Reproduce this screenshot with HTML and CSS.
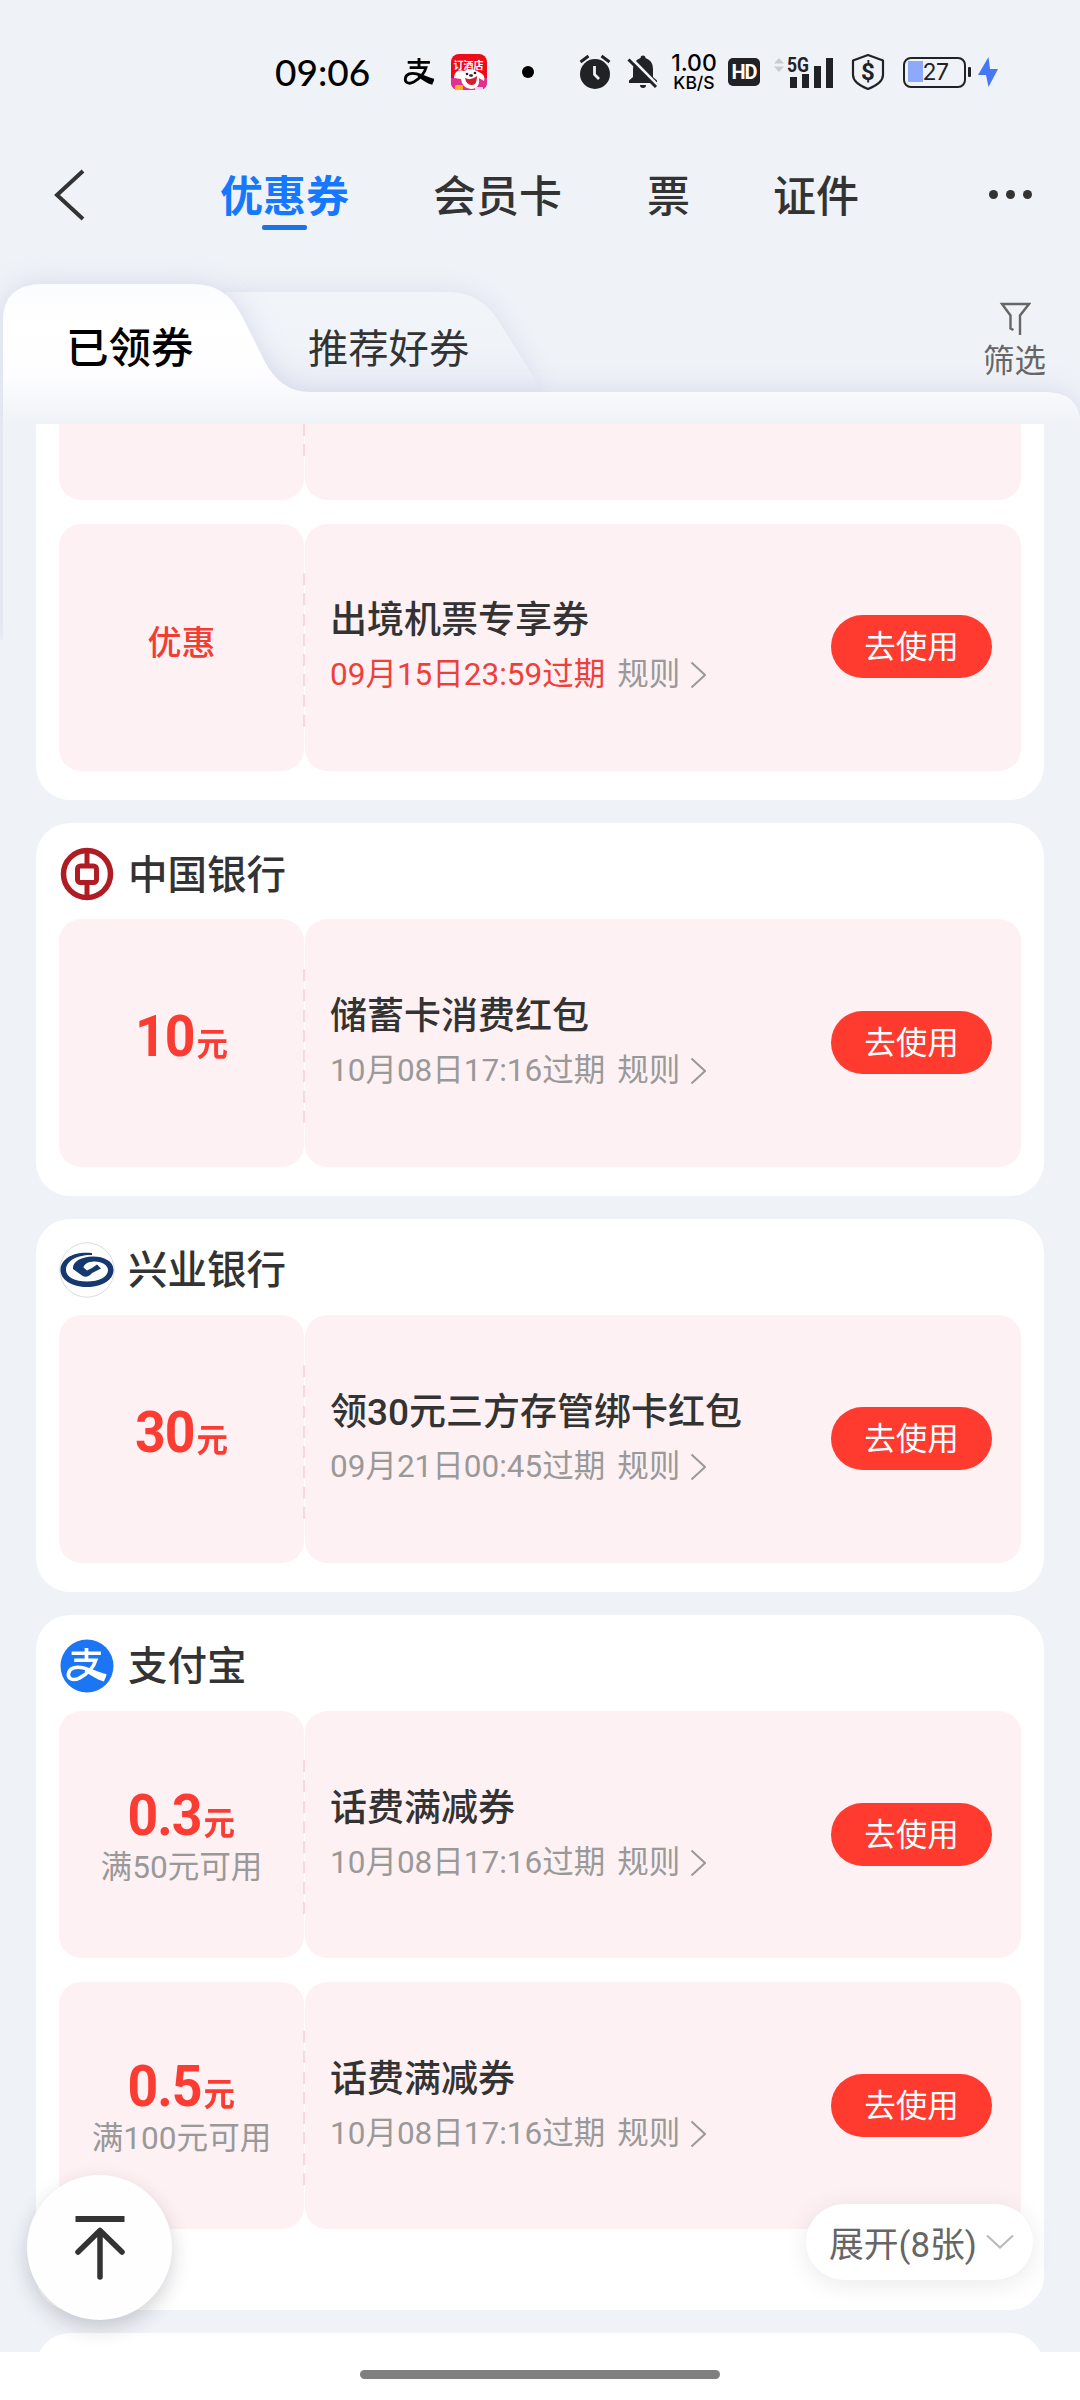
FILE: index.html
```html
<!DOCTYPE html>
<html lang="zh-CN">
<head>
<meta charset="utf-8">
<title>优惠券</title>
<link rel="stylesheet" href="styles.css">
</head>
<body>
<svg class="defs" width="0" height="0" aria-hidden="true">
  <defs>
    <symbol id="chev" viewBox="0 0 16 28"><path d="M1.500 1.500 15 14 1.500 26.500" fill="none" stroke="currentColor" stroke-width="2"/></symbol>
    <symbol id="zhi" viewBox="0 0 40 36">
      <path d="M5.500 5.500H34M20 0V12M8 12.500H29C27 20 20 27 13 31C6 34.500 1.500 31 2.500 26C3.500 20.500 10 18.500 17 20.500C24 22.500 31 27 39 28.500" fill="none" stroke="currentColor" stroke-width="3.600"/>
      <path d="M20 21.500C27 24.500 32 26.500 39.500 27.500L37 34.500C30 32.500 25 28.500 18 24Z" fill="currentColor"/>
    </symbol>
  </defs>
</svg>
<div class="screen">
  <svg class="folder" width="1080" height="430" viewBox="0 0 1080 430">
    <defs>
      <linearGradient id="front" gradientUnits="userSpaceOnUse" x1="0" y1="74" x2="0" y2="215">
        <stop offset="0" stop-color="#fbfcfe"/><stop offset=".3" stop-color="#ffffff"/><stop offset=".65" stop-color="#fdfdff"/><stop offset="1" stop-color="#eff2f7"/>
      </linearGradient>
      <linearGradient id="back" x1="0" y1="0" x2="0" y2="1">
        <stop offset="0" stop-color="#f1f4f8"/><stop offset=".5" stop-color="#f0f3f8"/><stop offset="1" stop-color="#e9edf5"/>
      </linearGradient>
      <filter id="soft" x="-10%" y="-30%" width="120%" height="160%"><feGaussianBlur stdDeviation="13"/></filter>
    </defs>
    <path d="M225 82H448Q480 82 498 110L543 182H225Z" fill="#b9c0dc" opacity=".38" filter="url(#soft)"/>
    <path d="M225 82H448Q480 82 498 110L543 182H225Z" fill="url(#back)"/>
    <path d="M3 430V110Q3 74 43 74H192C220 74 233 88 243 108L264 150Q280 182 310 182H1046Q1076 182 1080 208V430Z" fill="#b9c0dc" opacity=".5" filter="url(#soft)"/>
    <path d="M3 430V110Q3 74 43 74H192C220 74 233 88 243 108L264 150Q280 182 310 182H1046Q1076 182 1080 208V430Z" fill="url(#front)"/>
  </svg>

  <div class="status">
    <span class="time">09:06</span>
    <svg class="s-zhi" width="34" height="28"><use href="#zhi"/></svg>
    <svg class="s-app" width="36" height="36" viewBox="0 0 36 36">
      <rect width="36" height="36" rx="8" fill="#ee0a18"/>
      <path d="M0 24H36V28Q36 36 28 36H8Q0 36 0 28Z" fill="#e3308e"/>
      <text x="17.500" y="15" text-anchor="middle" class="app-text">订酒店</text>
      <path d="M3 24Q4 14 13 17Q20 13 28 18Q35 21 33 27L28 24Q29 35 20 35Q11 34 10 25Z" fill="#fff"/>
      <path d="M14 24Q20 27 26 22Q26 32 20 31Q15 30 14 24Z" fill="#d81d2c"/>
      <circle cx="16" cy="20" r="1.300" fill="#222"/><circle cx="24" cy="19" r="1.300" fill="#222"/><ellipse cx="20" cy="21.500" rx="2" ry="1.300" fill="#222"/>
      <rect x="4" y="31" width="8" height="5" rx="1" fill="#ffb31a"/><rect x="24" y="33" width="8" height="3" fill="#efd4f5"/>
    </svg>
    <i class="dot"></i>
    <svg class="s-alarm" width="32" height="36" viewBox="0 0 32 36">
      <circle cx="16" cy="20" r="15" fill="#212226"/><path d="M1.500 8 9.500 2M30.500 8 22.500 2" stroke="#212226" stroke-width="3"/><path d="M15.500 12V20.500L20 25" fill="none" stroke="#f0f3f8" stroke-width="2.800"/>
    </svg>
    <svg class="s-bell" width="32" height="36" viewBox="0 0 32 36">
      <path d="M16 1.500Q18.500 1.500 18.500 4Q26 6.500 26 15V23L30 26.500V29H2V26.500L6 23V15Q6 6.500 13.500 4Q13.500 1.500 16 1.500ZM13 31H19Q19 34 16 34Q13 34 13 31Z" fill="#212226"/>
      <path d="M3.500 3.500 31 31.500" stroke="#f0f3f8" stroke-width="3"/><path d="M1.500 5.500 29 33" stroke="#212226" stroke-width="3"/>
    </svg>
    <span class="speed"><b>1.00</b><b>KB/S</b></span>
    <span class="hd">HD</span>
    <svg class="s-sig" width="60" height="34" viewBox="0 0 60 34">
      <path d="M0 8.500 5 3 10 8.500ZM0 11.500H10L5 17Z" fill="#c9ccd1"/>
      <text x="13" y="17" class="g5" textLength="22" lengthAdjust="spacingAndGlyphs">5G</text>
      <path d="M16 22H23V33H16ZM28 19H35V33H28ZM40 11H47V33H40ZM52 3H59V33H52Z" fill="#212226"/>
    </svg>
    <svg class="s-shield" width="34" height="38" viewBox="0 0 34 38">
      <path d="M17 2 32 7.500V22Q32 30 17 36Q2 30 2 22V7.500Z" fill="none" stroke="#212226" stroke-width="2.200" stroke-linejoin="round"/>
      <text x="17" y="26.500" text-anchor="middle" class="dollar">$</text>
    </svg>
    <span class="battery"><em>27</em></span><i class="cap"></i>
    <svg class="s-bolt" width="20" height="30" viewBox="0 0 20 30"><path d="M10.500 0 0 18H8L10.500 30 20 12H12Z" fill="#4678f6"/></svg>
  </div>

  <header class="nav">
    <svg class="back" width="32" height="52" viewBox="0 0 32 52"><path d="M29 2 3 26 29 50" fill="none" stroke="#333" stroke-width="4"/></svg>
    <a class="n1 on">优惠券</a><a class="n2">会员卡</a><a class="n3">票</a><a class="n4">证件</a>
    <span class="more"><i></i><i></i><i></i></span>
  </header>

  <div class="tabs">
    <span class="t1">已领券</span><span class="t2">推荐好券</span>
    <span class="filter">
      <svg width="32" height="34" viewBox="0 0 32 34"><path d="M14.500 28 11.500 26.500V13.500L3 2H30L21 13.500V33" fill="none" stroke="#666" stroke-width="2.400"/></svg>
      <span>筛选</span>
    </span>
  </div>

  <main class="list">
    <section class="card first">
      <div class="coupon cut"><div class="amt"></div><div class="info"></div></div>
      <div class="coupon">
        <div class="amt"><div class="word">优惠</div></div>
        <div class="info"><div class="desc"><h3>出境机票专享券</h3><p><span class="soon">09月15日23:59过期</span><span>规则</span><svg width="16" height="28"><use href="#chev"/></svg></p></div><a class="btn">去使用</a></div>
      </div>
    </section>

    <section class="card">
      <div class="brand">
        <svg width="56" height="56" viewBox="0 0 56 56"><circle cx="28" cy="28" r="23.500" fill="none" stroke="#b01c24" stroke-width="5.500"/><path d="M28 5V19M28 37V51" stroke="#b01c24" stroke-width="5"/><rect x="18.500" y="20" width="19" height="16.500" rx="3" fill="none" stroke="#b01c24" stroke-width="5"/></svg>
        <h2>中国银行</h2>
      </div>
      <div class="coupon">
        <div class="amt"><div class="num">10<small>元</small></div></div>
        <div class="info"><div class="desc"><h3>储蓄卡消费红包</h3><p><span>10月08日17:16过期</span><span>规则</span><svg width="16" height="28"><use href="#chev"/></svg></p></div><a class="btn">去使用</a></div>
      </div>
    </section>

    <section class="card">
      <div class="brand">
        <svg width="56" height="56" viewBox="0 0 56 56"><circle cx="28" cy="28" r="27.200" fill="#fff" stroke="#dcdce2"/><path d="M33 11C14 9 1.500 17 1.500 28C1.500 38 13 45 28 45C43 45 54.500 38 54.500 28C54.500 19 45 14.500 34 14.500C22 14.500 13 20 14 27L23 33.500Q28 37 33 31L42 26.500 38 22.500 33 26 28 28.500 24.500 25.500C25 22 30 19 36 19.500C43 20 49 23 49 28C49 35 40 39.500 28 39.500C16 39.500 7 35 7 28C7 19 18 12.500 33 13Z" fill="#14386f"/></svg>
        <h2>兴业银行</h2>
      </div>
      <div class="coupon">
        <div class="amt"><div class="num">30<small>元</small></div></div>
        <div class="info"><div class="desc"><h3>领30元三方存管绑卡红包</h3><p><span>09月21日00:45过期</span><span>规则</span><svg width="16" height="28"><use href="#chev"/></svg></p></div><a class="btn">去使用</a></div>
      </div>
    </section>

    <section class="card last">
      <div class="brand">
        <svg width="56" height="56" viewBox="0 0 56 56"><circle cx="28" cy="28" r="26.500" fill="#1b75f5"/><svg class="w" x="7" y="10" width="41" height="35" preserveAspectRatio="none" viewBox="0 0 40 36"><use href="#zhi" width="40" height="36"/></svg></svg>
        <h2>支付宝</h2>
      </div>
      <div class="coupon">
        <div class="amt"><div class="num two">0.3<small>元</small></div><div class="cond">满50元可用</div></div>
        <div class="info"><div class="desc"><h3>话费满减券</h3><p><span>10月08日17:16过期</span><span>规则</span><svg width="16" height="28"><use href="#chev"/></svg></p></div><a class="btn">去使用</a></div>
      </div>
      <div class="coupon">
        <div class="amt"><div class="num two">0.5<small>元</small></div><div class="cond">满100元可用</div></div>
        <div class="info"><div class="desc"><h3>话费满减券</h3><p><span>10月08日17:16过期</span><span>规则</span><svg width="16" height="28"><use href="#chev"/></svg></p></div><a class="btn">去使用</a></div>
      </div>
      <a class="expand">展开(8张)<svg width="28" height="16" viewBox="0 0 28 16"><path d="M1 1.500 14 13.500 27 1.500" fill="none" stroke="#bbb" stroke-width="2.200"/></svg></a>
    </section>
    <section class="card next"></section>
  </main>

  <a class="totop"><svg width="52" height="66" viewBox="0 0 52 66"><path d="M1.500 4H50.500" stroke="#333" stroke-width="6"/><path d="M26 62V16M4 37 26 15.500 48 37" fill="none" stroke="#333" stroke-width="5.500" stroke-linecap="round" stroke-linejoin="round"/></svg></a>
  <footer class="gesture"><i></i></footer>
</div>
</body>
</html>
```
FILE: styles.css
```css
* { box-sizing: border-box; margin: 0; padding: 0; }
body { width: 1080px; height: 2400px; overflow: hidden; font-family: Roboto, "Noto Sans CJK SC", sans-serif; color: #333; background: #eff2f7; }
i, em { font-style: normal; }
svg { display: block; flex: none; }
.defs { position: absolute; }
.screen { position: relative; display: flex; flex-direction: column; height: 2400px; overflow: hidden; }
.folder { position: absolute; left: 0; top: 210px; }

.status, .nav, .tabs, .list { position: relative; flex: none; }
.status { height: 144px; padding-left: 275px; display: flex; align-items: center; color: #000; }
.time { font: 500 37px/40px Lato, sans-serif; width: 127px; }
.s-zhi { margin-right: 15px; }
.s-app { margin-right: 35px; }
.app-text { font: 700 10px "Noto Sans CJK SC", sans-serif; fill: #fff; }
.dot { width: 12px; height: 12px; border-radius: 50%; background: #000; margin-right: 45px; }
.s-alarm { margin-right: 16px; }
.s-bell { margin-right: 11px; }
.speed { width: 48px; margin-right: 10px; display: flex; flex-direction: column; align-items: center; }
.speed b { font: 500 23px/22px Inter, sans-serif; }
.speed b + b { font-size: 17.500px; line-height: 18px; }
.hd { width: 32px; height: 28px; border-radius: 5px; background: #212226; color: #fff; font: 700 20px/29px "Liberation Sans Narrow", Roboto, sans-serif; text-align: center; margin-right: 14px; letter-spacing: -1px; }
.s-sig { margin-right: 17px; overflow: visible; }
.g5 { font: 700 20px Roboto, sans-serif; fill: #212226; }
.s-shield { margin-right: 18px; }
.dollar { font: 700 24px Roboto, sans-serif; fill: #212226; }
.battery { width: 63px; height: 31px; border: 2.500px solid #212226; border-radius: 8px; background: linear-gradient(#8ea9fa, #8ea9fa) 3px 2.500px / 15px 21px no-repeat; text-align: center; padding-left: 2px; }
.battery em { font: 400 23px/27px Inter, sans-serif; color: #212226; letter-spacing: -.5px; }
.cap { width: 3px; height: 10px; background: #212226; border-radius: 1px; margin: 0 7px 0 2px; }

.nav { height: 112px; padding: 25px 0 0 54px; display: flex; align-items: flex-start; }
.back { margin-right: 134px; }
.nav a { font-size: 43px; line-height: 56px; font-weight: 500; }
.nav .on { font-weight: 700; color: #1677ff; display: flex; flex-direction: column; align-items: center; }
.nav .on::after { content: ""; width: 45px; height: 5px; border-radius: 2px; background: #1f73e8; }
.nav .n1 { width: 129px; margin-right: 84px; }
.n2 { width: 214px; }
.n3 { width: 126px; }
.more { display: flex; gap: 8px; margin: 21px 0 0 130px; }
.more i { width: 9px; height: 9px; border-radius: 50%; background: #333; }

.tabs { height: 168px; display: flex; align-items: flex-start; }
.t1 { margin: 65px 0 0 66px; width: 242px; font-size: 42.500px; line-height: 56px; font-weight: 500; color: #000; }
.t2 { margin-top: 66px; width: 675px; font-size: 40.300px; line-height: 56px; }
.filter { margin-top: 46px; color: #666; font-size: 31.500px; line-height: 40px; display: flex; flex-direction: column; align-items: center; }
.filter span { margin-top: 6px; }

.list { height: 1928px; overflow: hidden; padding: 0 36px; display: flex; flex-direction: column; gap: 23px; }
.card { position: relative; flex: none; background: #fff; border-radius: 34px; padding: 0 23px 29px; display: flex; flex-direction: column; }
.card.first { border-top-left-radius: 0; border-top-right-radius: 0; }
.card.last { padding-bottom: 81px; }
.card.next { height: 200px; }
.brand { height: 96.250px; display: flex; align-items: center; gap: 13px; padding: 6px 0 0 0; }
.brand h2 { font-size: 39.500px; font-weight: 500; line-height: 56px; padding-top: 3px; }
.w { color: #fff; }
.coupon { position: relative; height: 247.500px; display: flex; gap: 1px; }
.coupon + .coupon { margin-top: 23.500px; }
.coupon.cut { height: 76px; margin-top: 0; }
.coupon::after { content: ""; position: absolute; left: 244px; bottom: 44px; width: 2px; height: 154px; background: repeating-linear-gradient(#f4dadd 0 12px, transparent 12px 20.300px); }
.cut { overflow: hidden; }
.amt { width: 245px; background: #fef1f3; border-radius: 22px; text-align: center; display: flex; flex-direction: column; align-items: center; justify-content: center; }
.info { flex: 1; background: #fef1f3; border-radius: 22px; display: flex; align-items: center; justify-content: space-between; padding: 0 29px 0 25px; }
.cut .amt, .cut .info { border-top-left-radius: 0; border-top-right-radius: 0; }
.word { color: #f13d34; font-size: 34px; font-weight: 500; line-height: 48px; margin-bottom: 9px; }
.num { color: #fb3c33; font-size: 57px; font-weight: 700; line-height: 60px; margin-bottom: 4px; letter-spacing: -1px; transform: scaleX(.94); white-space: nowrap; }
.num small { font-size: 33.500px; font-weight: 700; margin-left: 2px; letter-spacing: 0; }
.num.two { margin: 12px 0 -6px; }
.cond { color: #999; font-size: 31.600px; line-height: 40px; white-space: nowrap; margin-bottom: 8px; }
.desc { height: 100px; margin-top: -2px; }
.desc h3 { font-size: 37px; line-height: 50px; font-weight: 500; white-space: nowrap; }
.desc p { display: flex; align-items: center; font-size: 31.500px; line-height: 44px; color: #999; margin-top: 7px; white-space: nowrap; }
.desc p span + span { margin: 0 10px 0 12px; }
.desc .soon { color: #ee403a; }
.btn { width: 161px; height: 63px; border-radius: 32px; background: #ff3a2f; color: #fff; font-size: 31.500px; line-height: 65px; text-align: center; margin-top: -1px; }

.expand { position: absolute; right: 11px; bottom: 30px; width: 227px; height: 76px; border-radius: 38px; background: #fff; box-shadow: 0 4px 26px rgba(0,0,0,.09); display: flex; align-items: center; padding-left: 23px; gap: 9px; font-size: 34.800px; color: #666; white-space: nowrap; }
.totop { position: absolute; left: 27px; top: 2175px; width: 145px; height: 145px; border-radius: 50%; background: #fefefe; box-shadow: 0 8px 20px rgba(30,35,50,.2); display: flex; align-items: center; justify-content: center; }
.gesture { position: relative; height: 48px; background: #fff; display: flex; justify-content: center; padding-top: 18px; }
.gesture i { width: 360px; height: 9px; border-radius: 5px; background: #7f7f7f; }
```
